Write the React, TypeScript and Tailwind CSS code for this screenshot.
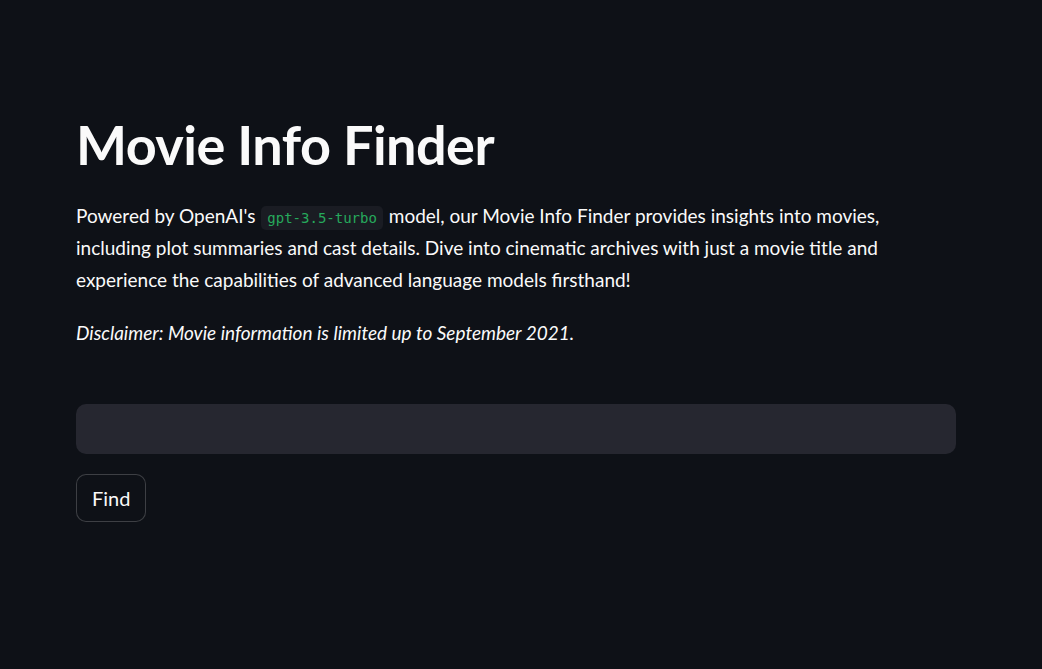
import { useState } from 'react';

export default function App() {
  const [title, setTitle] = useState('');

  return (
    <div className="min-h-screen w-full bg-[#0e1117] text-[#fafafa] font-['Lato','Noto_Sans',sans-serif]">
      <div className="w-[880px] ml-[76px] pt-[113px]">
        {/* Header */}
        <h1 className="text-[54px] font-bold leading-[1.2] tracking-[-0.01em] mb-[22px]">
          Movie Info Finder
        </h1>

        <p className="text-[19px] leading-[32px] mb-[21px]">
          Powered by OpenAI's{' '}
          <code className="inline-block mx-[1px] font-['DejaVu_Sans_Mono','Liberation_Mono',monospace] text-[14px] leading-[24px] text-[#26a95c] bg-[#1a1c23] rounded-[5px] px-[6px]">
            gpt-3.5-turbo
          </code>{' '}
          model, our Movie Info Finder provides insights into movies, including plot summaries and cast
          details. Dive into cinematic archives with just a movie title and experience the capabilities of
          advanced language models firsthand!
        </p>

        <p className="text-[19px] leading-[32px] italic">
          Disclaimer: Movie information is limited up to September 2021.
        </p>

        {/* Search */}
        <div className="mt-[55px]">
          <input
            value={title}
            onChange={e => setTitle(e.target.value)}
            className="w-full h-[50px] rounded-[10px] bg-[#262730] px-4 text-[20px] text-[#fafafa] outline-none"
          />
        </div>

        <button className="mt-[20px] h-[48px] px-[15px] rounded-[10px] border border-[#fafafa]/20 bg-[#0e1117] text-[20px] text-[#fafafa]">
          Find
        </button>
      </div>
    </div>
  );
}
